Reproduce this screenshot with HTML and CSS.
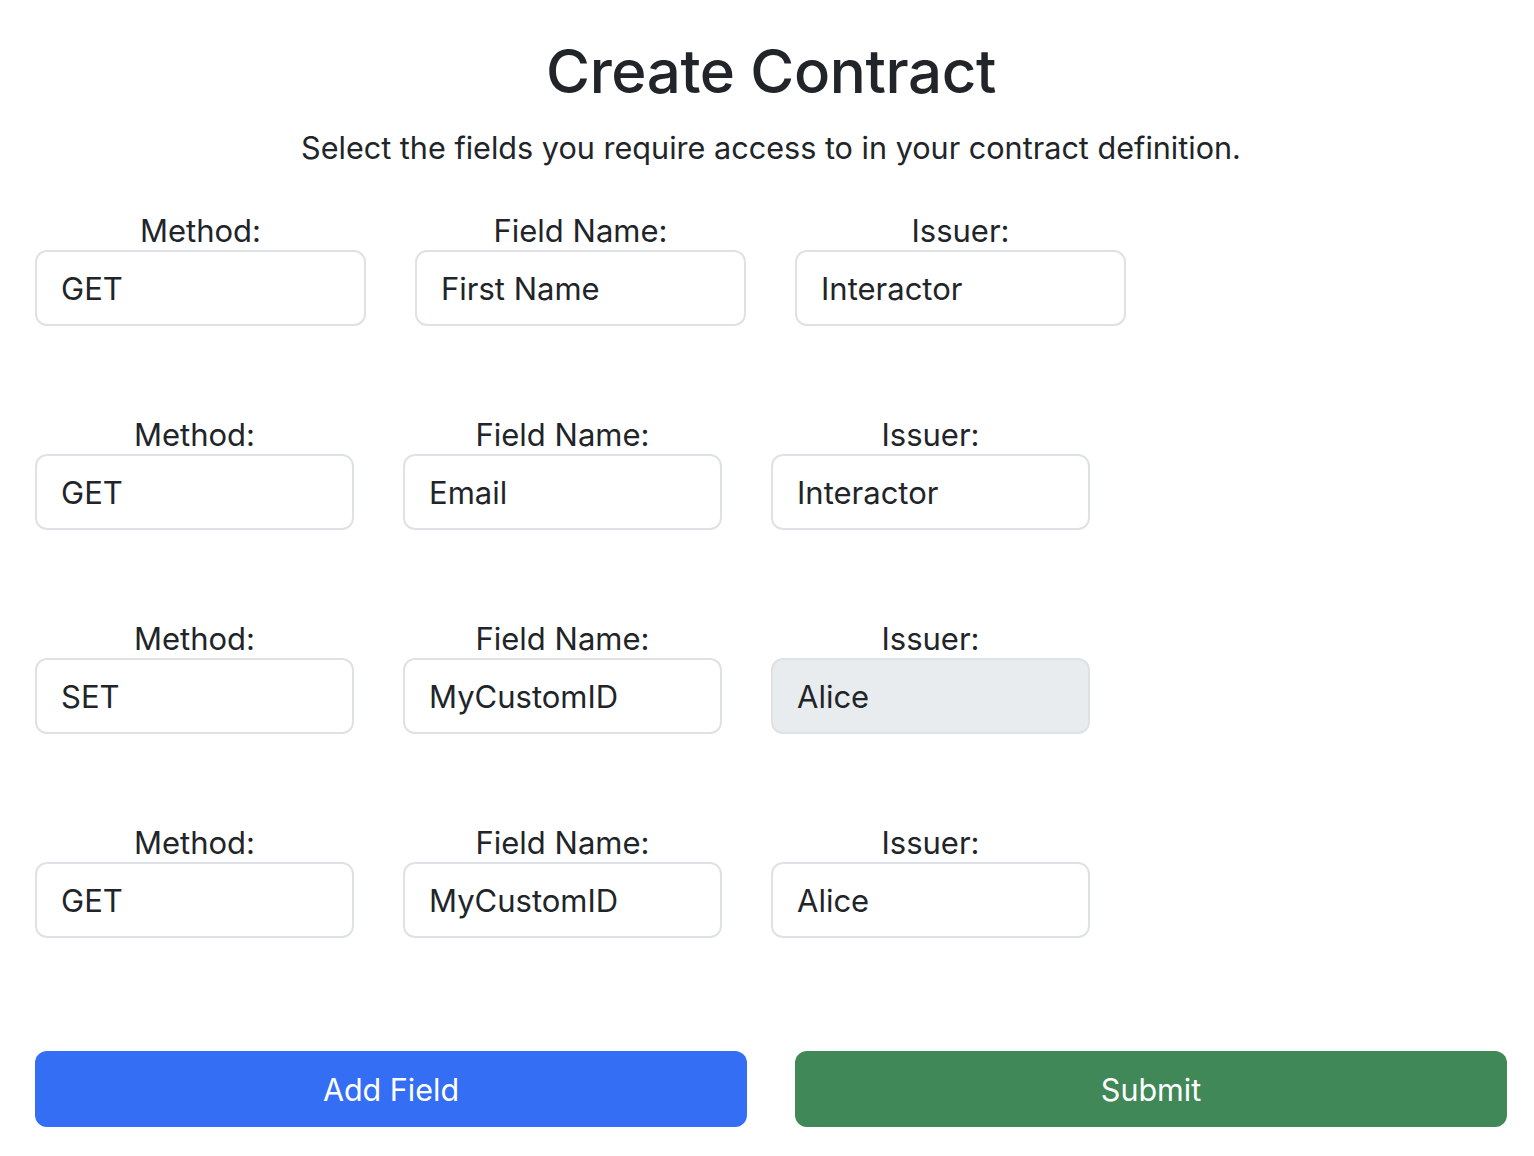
FILE: index.html
```html
<!DOCTYPE html>
<html lang="en">
<head>
<meta charset="utf-8">
<title>Create Contract</title>
<link rel="stylesheet" href="styles.css">
</head>
<body>
<main class="page">
  <h1 class="title">Create Contract</h1>
  <p class="lead">Select the fields you require access to in your contract definition.</p>

  <div class="field-row field-row--wide">
    <div class="field"><label class="field-label">Method:</label><div class="field-input">GET</div></div>
    <div class="field"><label class="field-label">Field Name:</label><div class="field-input">First Name</div></div>
    <div class="field"><label class="field-label">Issuer:</label><div class="field-input">Interactor</div></div>
  </div>

  <div class="field-row">
    <div class="field"><label class="field-label">Method:</label><div class="field-input">GET</div></div>
    <div class="field"><label class="field-label">Field Name:</label><div class="field-input">Email</div></div>
    <div class="field"><label class="field-label">Issuer:</label><div class="field-input">Interactor</div></div>
  </div>

  <div class="field-row">
    <div class="field"><label class="field-label">Method:</label><div class="field-input">SET</div></div>
    <div class="field"><label class="field-label">Field Name:</label><div class="field-input">MyCustomID</div></div>
    <div class="field"><label class="field-label">Issuer:</label><div class="field-input field-input--disabled">Alice</div></div>
  </div>

  <div class="field-row">
    <div class="field"><label class="field-label">Method:</label><div class="field-input">GET</div></div>
    <div class="field"><label class="field-label">Field Name:</label><div class="field-input">MyCustomID</div></div>
    <div class="field"><label class="field-label">Issuer:</label><div class="field-input">Alice</div></div>
  </div>

  <div class="actions">
    <button class="btn btn--primary" type="button">Add Field</button>
    <button class="btn btn--success" type="button">Submit</button>
  </div>
</main>
</body>
</html>
```

FILE: styles.css
```css
* { box-sizing: border-box; }

html, body {
  margin: 0;
  padding: 0;
  background: #ffffff;
}

body {
  font-family: Inter, "Noto Sans", "Liberation Sans", sans-serif;
  color: #212529;
}

.page {
  width: 1472px;
  margin-left: 35px;
  padding-top: 31px;
}

.title {
  margin: 0;
  text-align: center;
  font-size: 60px;
  font-weight: 500;
  line-height: 80px;
  letter-spacing: -0.4px;
}

.lead {
  margin: 17px 0 0;
  text-align: center;
  font-size: 30.6px;
  line-height: 40px;
  font-weight: 400;
}

.field-row {
  display: grid;
  grid-template-columns: repeat(3, 319px);
  column-gap: 49px;
  margin-top: 90px;
}

.field-row--wide {
  grid-template-columns: repeat(3, 331px);
  margin-top: 44px;
}

.field {
  display: flex;
  flex-direction: column;
}

.field-label {
  display: block;
  text-align: center;
  font-size: 31px;
  line-height: 38px;
  margin-bottom: 0;
}

.field-input {
  height: 76px;
  border: 2px solid #dee2e6;
  border-radius: 12px;
  padding: 0 24px;
  display: flex;
  align-items: center;
  font-size: 31px;
  background: #ffffff;
}

.field-input--disabled {
  background: #e9ecef;
}

.actions {
  display: grid;
  grid-template-columns: 1fr 1fr;
  column-gap: 48px;
  margin-top: 113px;
}

.btn {
  height: 76px;
  border: none;
  border-radius: 12px;
  color: #ffffff;
  font-family: inherit;
  font-size: 30.5px;
  font-weight: 400;
  cursor: pointer;
}

.btn--primary { background: #346ef5; }
.btn--success { background: #408858; }
```
